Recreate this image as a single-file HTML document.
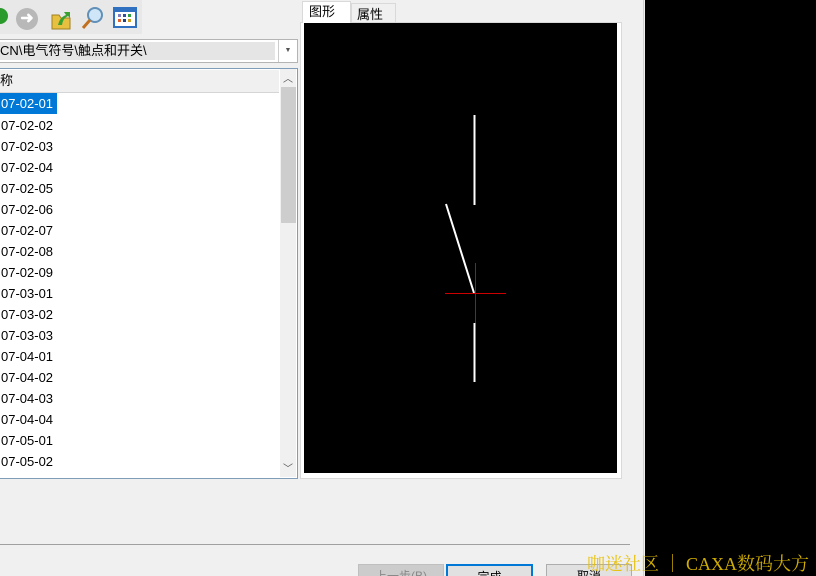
<!DOCTYPE html>
<html style="overflow:hidden;height:576px"><head><meta charset="utf-8"><style>
body{margin:0;width:816px;height:576px;overflow:hidden;background:#f0f0f0;position:relative;font-family:"Liberation Sans","Noto Sans CJK SC",sans-serif;font-size:12px;color:#000}
.a{position:absolute}
.row{position:absolute;left:0;height:21px;line-height:21px;font-size:13px;padding-left:1px}
</style></head><body>
<div class="a" style="left:0;top:0;width:142px;height:34px;background:#e8e8e8"></div>
<div class="a" style="left:-8px;top:8px;width:16px;height:16px;border-radius:50%;background:#2a9a2a"></div>
<div class="a" style="left:16px;top:8px;width:22px;height:22px;border-radius:50%;background:#b8b8b8;color:#fff;font-size:16px;line-height:22px;text-align:center;font-weight:bold">➜</div>
<svg class="a" style="left:50px;top:5px" width="22" height="26"><path d="M2 10h7l2 3h9v11H2z" fill="#e8c040" stroke="#a08020"/><path d="M8 20q2-8 8-10l-2-3h6v6l-2-2q-5 2-6 9z" fill="#3aa030"/></svg>
<svg class="a" style="left:80px;top:5px" width="26" height="26"><circle cx="15" cy="10" r="7" fill="#cfe6f8" stroke="#6090b8" stroke-width="2"/><path d="M10 15L3 23" stroke="#c07020" stroke-width="3"/></svg>
<svg class="a" style="left:113px;top:7px" width="24" height="22"><rect x="1" y="1" width="22" height="19" fill="#fff" stroke="#3070c0" stroke-width="2"/><rect x="1" y="1" width="22" height="4" fill="#3070c0"/><rect x="5" y="7" width="3" height="3" fill="#8080c0"/><rect x="10" y="7" width="3" height="3" fill="#3050a0"/><rect x="15" y="7" width="3" height="3" fill="#30a040"/><rect x="5" y="12" width="3" height="3" fill="#e06030"/><rect x="10" y="12" width="3" height="3" fill="#204080"/><rect x="15" y="12" width="3" height="3" fill="#d0a020"/></svg>
<div class="a" style="left:-2px;top:39px;width:298px;height:22px;border:1px solid #b4b4b4;background:#fff"></div>
<div class="a" style="left:0;top:42px;width:275px;height:18px;background:#e5e5e5;line-height:18px;font-size:13px">CN\电气符号\触点和开关\</div>
<div class="a" style="left:278px;top:40px;width:18px;height:22px;border-left:1px solid #ccc;font-size:7px;line-height:22px;text-align:center;color:#555">▼</div>
<div class="a" style="left:-2px;top:68px;width:298px;height:409px;border:1px solid #7f9db9;background:#fff"></div>
<div class="a" style="left:0;top:70px;width:279px;height:22px;background:#f0f0f0;border-bottom:1px solid #d5d5d5;line-height:22px;font-size:13px">称</div>
<div class="a" style="left:280px;top:69px;width:16px;height:408px;background:#f0f0f0"></div>
<div class="a" style="left:281px;top:87px;width:15px;height:136px;background:#cdcdcd"></div>
<div class="a" style="left:280px;top:70px;width:16px;height:16px;text-align:center;font-size:10px;color:#555">︿</div>
<div class="a" style="left:280px;top:460px;width:16px;height:16px;text-align:center;font-size:10px;color:#555">﹀</div>
<div class="row" style="top:93px;background:#0078d7;color:#fff;width:56px">07-02-01</div>
<div class="row" style="top:115px">07-02-02</div>
<div class="row" style="top:136px">07-02-03</div>
<div class="row" style="top:157px">07-02-04</div>
<div class="row" style="top:178px">07-02-05</div>
<div class="row" style="top:199px">07-02-06</div>
<div class="row" style="top:220px">07-02-07</div>
<div class="row" style="top:241px">07-02-08</div>
<div class="row" style="top:262px">07-02-09</div>
<div class="row" style="top:283px">07-03-01</div>
<div class="row" style="top:304px">07-03-02</div>
<div class="row" style="top:325px">07-03-03</div>
<div class="row" style="top:346px">07-04-01</div>
<div class="row" style="top:367px">07-04-02</div>
<div class="row" style="top:388px">07-04-03</div>
<div class="row" style="top:409px">07-04-04</div>
<div class="row" style="top:430px">07-05-01</div>
<div class="row" style="top:451px">07-05-02</div>
<div class="a" style="left:300px;top:22px;width:320px;height:455px;border:1px solid #d9d9d9;background:#fff"></div>
<div class="a" style="left:302px;top:1px;width:49px;height:22px;border:1px solid #d9d9d9;border-bottom:none;background:#fff;line-height:20px;padding-left:6px;box-sizing:border-box;font-size:13px">图形</div>
<div class="a" style="left:351px;top:3px;width:45px;height:19px;border:1px solid #d9d9d9;border-bottom:none;background:#f0f0f0;line-height:22px;padding-left:5px;box-sizing:border-box;font-size:13px">属性</div>
<svg class="a" style="left:304px;top:23px" width="313" height="450"><rect width="313" height="450" fill="#000"/>
<path d="M170.5 92V182M142 181L170 270M170.5 300V359" stroke="#fff" stroke-width="2"/>
<path d="M141 270.5H202M171.5 240V300" stroke="#c00" stroke-width="1"/></svg>
<div class="a" style="left:643px;top:0;width:1px;height:576px;background:#d0d0d0"></div>
<div class="a" style="left:645px;top:0;width:171px;height:576px;background:#000"></div>
<div class="a" style="left:0;top:544px;width:630px;height:1px;background:#a0a0a0"></div>
<div class="a" style="left:358px;top:564px;width:84px;height:20px;border:1px solid #bfbfbf;background:#ccc;color:#888;text-align:center;line-height:22px;font-size:12px">上一步(B)</div>
<div class="a" style="left:446px;top:564px;width:83px;height:20px;border:2px solid #0078d7;background:#e1e1e1;text-align:center;line-height:22px">完成</div>
<div class="a" style="left:546px;top:564px;width:84px;height:20px;border:1px solid #adadad;background:#e1e1e1;text-align:center;line-height:22px">取消</div>
<div class="a" style="left:587px;top:550px;color:#e8c000;font-family:'Liberation Serif','Noto Serif CJK SC',serif;font-size:18px;white-space:nowrap;opacity:.9">咖迷社区 ｜ CAXA数码大方</div>
</body></html>
